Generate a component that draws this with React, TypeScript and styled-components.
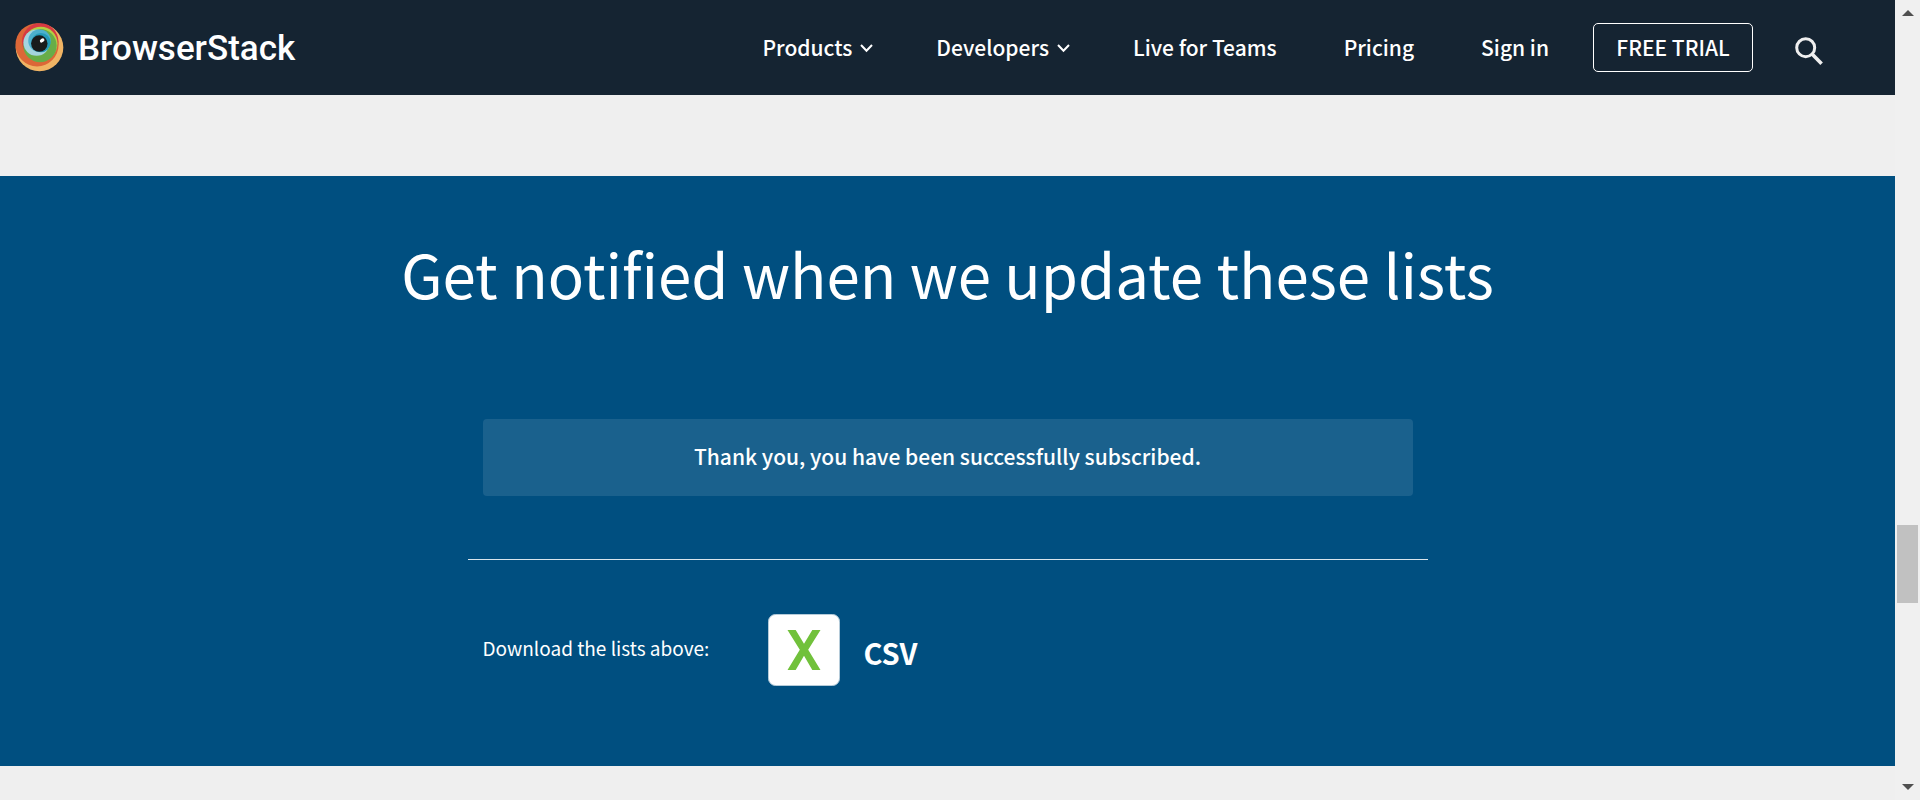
import React from "react";
import styled, { createGlobalStyle } from "styled-components";

const GlobalStyle = createGlobalStyle`
  *, *::before, *::after { box-sizing: border-box; }
  body {
    margin: 0;
    background: #efefef;
    color: #fff;
    font-family: "Noto Sans CJK SC", "Open Sans", sans-serif;
  }
`;

const Page = styled.div`
  display: grid;
  grid-template-columns: minmax(0, 1fr) 25px;
  min-height: 100vh;
`;

const Header = styled.header`
  display: flex;
  align-items: center;
  justify-content: space-between;
  height: 95px;
  padding: 0 72px 0 15px;
  background: #152432;
`;

const Brand = styled.a`
  display: flex;
  align-items: center;
  gap: 14px;
  color: #fff;
  font-family: Roboto, sans-serif;
  font-size: 35px;
  font-weight: 500;
  line-height: 48px;
  text-decoration: none;
`;

const BrandName = styled.span`
  padding-top: 3px;
`;

const Nav = styled.nav`
  display: flex;
  align-items: center;
`;

const Links = styled.div`
  display: flex;
  align-items: center;
  gap: 67px;
  margin-right: 44px;
`;

const NavLink = styled.a`
  display: flex;
  align-items: center;
  gap: 8px;
  padding-bottom: 1px;
  color: #fff;
  font-size: 21px;
  font-weight: 500;
  line-height: 32px;
  text-decoration: none;
`;

const MenuLink = styled(NavLink)`
  margin-right: -4px;
`;

const TrialLink = styled(NavLink)`
  justify-content: center;
  width: 160px;
  height: 49px;
  margin-right: 42px;
  border: 1px solid #fff;
  border-radius: 5px;
`;

const SearchButton = styled.button`
  display: flex;
  padding: 6px 0 0;
  border: 0;
  background: none;
  cursor: pointer;
`;

const Notify = styled.section`
  margin-top: 81px;
  padding: 53px 0 80px;
  background: #004f80;
`;

const Title = styled.h2`
  margin: 0;
  font-size: 60px;
  font-weight: 400;
  line-height: 88px;
  text-align: center;
`;

const Content = styled.div`
  width: 100%;
  max-width: 960px;
  margin: 102px auto 0;
`;

const Message = styled.p`
  margin: 0 15px 63px;
  padding: 21px 16px 24px;
  border-radius: 4px;
  background: #1a618d;
  font-size: 21px;
  font-weight: 500;
  line-height: 32px;
  text-align: center;
`;

const Divider = styled.hr`
  height: 1px;
  margin: 0;
  border: 0;
  background: #d9e5ec;
`;

const Downloads = styled.div`
  display: flex;
  align-items: center;
  gap: 59px;
  padding: 54px 15px 0;
`;

const Label = styled.span`
  min-width: 225px;
  padding-bottom: 5px;
  font-size: 19px;
  font-weight: 400;
  line-height: 32px;
`;

const CsvLink = styled.a`
  display: flex;
  align-items: center;
  gap: 23px;
  color: #fff;
  font-size: 29px;
  font-weight: 700;
  line-height: 40px;
  text-decoration: none;
`;

const CsvText = styled.span`
  padding-top: 4px;
`;

const ScrollBar = styled.div`
  display: flex;
  flex-direction: column;
  background: #f0f0f0;
`;

const Arrow = styled.svg`
  width: 25px;
  height: 25px;
`;

const Spacer = styled.div<{ $share: number }>`
  flex: ${(p) => p.$share} 0 0;
`;

const Thumb = styled.div`
  height: 78px;
  margin: 0 2px;
  background: #c1c1c1;
`;

const Logo = () => (
  <svg width="49" height="49" viewBox="0 0 49 50" aria-hidden="true">
    <circle cx="24.5" cy="25" r="24.3" fill="#f0b464" />
    <circle cx="22" cy="22.3" r="22" fill="#dc6737" />
    <circle cx="25.2" cy="18.8" r="18.6" fill="#d73a42" />
    <circle cx="25.8" cy="21" r="17.2" fill="#b5cf42" />
    <circle cx="25" cy="23" r="17" fill="#67ad48" />
    <circle cx="21.5" cy="20" r="13.4" fill="#a4d4df" />
    <circle cx="24.5" cy="18.2" r="11.5" fill="#4db0cd" />
    <circle cx="26" cy="20" r="9.8" fill="#249bb9" />
    <circle cx="24.3" cy="21" r="8.4" fill="#191b1c" />
    <ellipse cx="27.2" cy="17.8" rx="2.6" ry="1.8" fill="#fff" transform="rotate(-38 27.2 17.8)" />
  </svg>
);

const Chevron = () => (
  <svg width="13" height="14" viewBox="0 0 13 14" fill="none" aria-hidden="true">
    <path d="M1 5 6.5 10.8 12 5" stroke="#fff" strokeWidth="2" />
  </svg>
);

const SearchIcon = () => (
  <svg width="28" height="28" viewBox="0 0 28 28" fill="none" stroke="#efefef" aria-hidden="true">
    <circle cx="10.7" cy="10.7" r="9" strokeWidth="3" />
    <path d="m17.3 17.3 9.3 9.4" strokeWidth="3.6" />
  </svg>
);

const CsvIcon = () => (
  <svg width="72" height="72" viewBox="0 0 72 72" aria-hidden="true">
    <rect x=".5" y=".5" width="71" height="71" rx="7" fill="#fff" stroke="#b5cbd9" />
    <path
      d="M19.5 16h8.2L36 29.8 44.3 16h8.2L40.2 35.7 52.5 56h-8.2L36 41.7 27.7 56h-8.2l12.3-20.3z"
      fill="#71c13b"
    />
  </svg>
);

export default function App() {
  return (
    <Page>
      <GlobalStyle />
      <div>
        <Header>
          <Brand href="#home">
            <Logo />
            <BrandName>BrowserStack</BrandName>
          </Brand>
          <Nav aria-label="Main">
            <Links>
              <MenuLink href="#products">Products <Chevron /></MenuLink>
              <MenuLink href="#developers">Developers <Chevron /></MenuLink>
              <NavLink href="#live-for-teams">Live for Teams</NavLink>
              <NavLink href="#pricing">Pricing</NavLink>
              <NavLink href="#sign-in">Sign in</NavLink>
            </Links>
            <TrialLink href="#free-trial">FREE TRIAL</TrialLink>
            <SearchButton type="button" aria-label="Search">
              <SearchIcon />
            </SearchButton>
          </Nav>
        </Header>
        <main>
          <Notify>
            <Title>Get notified when we update these lists</Title>
            <Content>
              <Message role="status">Thank you, you have been successfully subscribed.</Message>
              <Divider />
              <Downloads>
                <Label>Download the lists above:</Label>
                <CsvLink href="#csv">
                  <CsvIcon />
                  <CsvText>CSV</CsvText>
                </CsvLink>
              </Downloads>
            </Content>
          </Notify>
        </main>
      </div>
      <ScrollBar aria-hidden="true">
        <Arrow viewBox="0 0 25 25"><path d="M7 16h12l-6-6z" fill="#505050" /></Arrow>
        <Spacer $share={500} />
        <Thumb />
        <Spacer $share={172} />
        <Arrow viewBox="0 0 25 25"><path d="M7 9h12l-6 6z" fill="#505050" /></Arrow>
      </ScrollBar>
    </Page>
  );
}
